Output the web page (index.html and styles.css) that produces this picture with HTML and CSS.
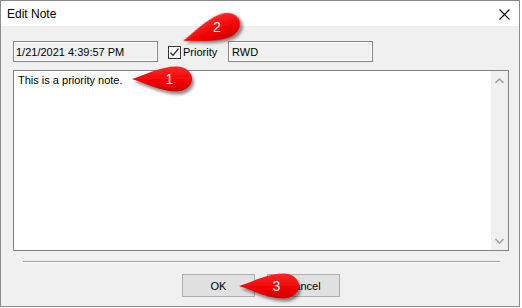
FILE: index.html
```html
<!DOCTYPE html>
<html>
<head>
<meta charset="utf-8">
<link rel="stylesheet" href="styles.css">
</head>
<body>
<div class="page">
  <div class="window">
    <div class="titlebar">
      <span class="title">Edit Note</span>
      <svg class="close" width="11" height="11" viewBox="0 0 11 11"><path d="M0.5 0.5 L10.5 10.5 M10.5 0.5 L0.5 10.5" stroke="#000" stroke-width="1.1" fill="none"/></svg>
    </div>
    <div class="content">
      <div class="toprow">
        <div class="field date">1/21/2021 4:39:57 PM</div>
        <div class="check">
          <span class="box"><svg width="11" height="11" viewBox="0 0 11 11"><path d="M1.5 5.5 L4 8.5 L9.5 1.5" stroke="#333" stroke-width="1.3" fill="none"/></svg></span>
          <span class="label">Priority</span>
        </div>
        <div class="field user">RWD</div>
      </div>
      <div class="note">
        <div class="notetext">This is a priority note.</div>
        <div class="scrollbar">
          <svg width="9" height="6" viewBox="0 0 9 6"><path d="M0.5 5 L4.5 1 L8.5 5" stroke="#a6a6a6" stroke-width="1.6" fill="none"/></svg>
          <svg width="9" height="6" viewBox="0 0 9 6"><path d="M0.5 1 L4.5 5 L8.5 1" stroke="#a6a6a6" stroke-width="1.6" fill="none"/></svg>
        </div>
      </div>
      <div class="sep"></div>
      <div class="buttons">
        <div class="btn">OK</div>
        <div class="btn">Cancel</div>
      </div>
    </div>
  </div>
  <svg class="callouts" width="522" height="308" viewBox="0 0 522 308">
    <defs>
      <linearGradient id="red" x1="0" y1="0" x2="0" y2="1">
        <stop offset="0" stop-color="#ff2a2a"/>
        <stop offset="0.6" stop-color="#f20000"/>
        <stop offset="1" stop-color="#cc0000"/>
      </linearGradient>
      <filter id="sh" x="-20%" y="-40%" width="150%" height="200%">
        <feDropShadow dx="2" dy="3" stdDeviation="1.8" flood-color="#000" flood-opacity="0.45"/>
      </filter>
      <path id="drop" d="M0,0 C14,-4 27,-12.5 45,-12.5 A15,12.5 0 0 1 45,12.5 C27,12.5 14,4 0,0 Z"/>
    </defs>
    <use href="#drop" transform="translate(183,41) rotate(-20)" fill="url(#red)" filter="url(#sh)"/>
    <use href="#drop" transform="translate(132,79)" fill="url(#red)" filter="url(#sh)"/>
    <use href="#drop" transform="translate(239,286)" fill="url(#red)" filter="url(#sh)"/>
    <text x="217" y="32" class="num">2</text>
    <text x="169.5" y="84" class="num">1</text>
    <text x="276.5" y="291" class="num">3</text>
  </svg>
</div>
</body>
</html>
```
FILE: styles.css
```css
html, body {
  margin: 0;
  padding: 0;
  background: #ffffff;
}
body {
  font-family: "Liberation Sans", Arial, sans-serif;
  font-size: 11px;
  color: #000;
}
.page {
  position: relative;
  width: 522px;
  height: 308px;
}
.window {
  box-sizing: border-box;
  width: 520px;
  height: 307px;
  border: 1px solid #8c8c8c;
  display: flex;
  flex-direction: column;
  background: #f0f0f0;
}
.titlebar {
  height: 25px;
  background: #ffffff;
  display: flex;
  align-items: center;
  justify-content: space-between;
  padding: 0 9px 0 6px;
  flex: none;
}
.title {
  font-size: 12px;
  padding-top: 1px;
}
.close {
  display: block;
  margin-top: 2px;
}
.content {
  flex: 1;
  padding: 15px 0 0 12px;
  display: flex;
  flex-direction: column;
}
.toprow {
  display: flex;
  align-items: center;
  height: 21px;
}
.field {
  box-sizing: border-box;
  width: 145px;
  height: 21px;
  border: 1px solid #858585;
  box-shadow: inset 0 0 0 1px #ffffff;
  background: #f0f0f0;
  padding: 0 2px;
  display: flex;
  align-items: center;
}
.check {
  width: 60px;
  margin-left: 10px;
  display: flex;
  align-items: center;
}
.box {
  box-sizing: border-box;
  width: 13px;
  height: 13px;
  border: 1px solid #333333;
  background: #ffffff;
  display: flex;
  align-items: center;
  justify-content: center;
  margin-top: 1px;
}
.box svg {
  display: block;
}
.label {
  margin-left: 2px;
  padding-top: 1px;
}
.user {
  padding-left: 3px;
}
.note {
  box-sizing: border-box;
  margin-top: 8px;
  width: 496px;
  height: 181px;
  border: 1px solid #828282;
  background: #ffffff;
  display: flex;
}
.notetext {
  flex: 1;
  padding: 3px 4px;
}
.scrollbar {
  width: 17px;
  background: #f0f0f0;
  display: flex;
  flex-direction: column;
  justify-content: space-between;
  align-items: center;
  padding: 7px 0 6px;
}
.scrollbar svg {
  display: block;
}
.sep {
  margin: 10px 0 0 10px;
  width: 477px;
  border-top: 1px solid #a0a0a0;
  border-bottom: 1px solid #ffffff;
}
.buttons {
  display: flex;
  margin: 11px 0 0 169px;
  gap: 12px;
}
.btn {
  box-sizing: border-box;
  width: 73px;
  height: 23px;
  border: 1px solid #adadad;
  background: #e1e1e1;
  display: flex;
  align-items: center;
  justify-content: center;
}
.callouts {
  position: absolute;
  left: 0;
  top: 0;
  pointer-events: none;
}
.num {
  fill: #ffffff;
  font-family: "Liberation Sans", Arial, sans-serif;
  font-size: 14px;
  text-anchor: middle;
}
```
